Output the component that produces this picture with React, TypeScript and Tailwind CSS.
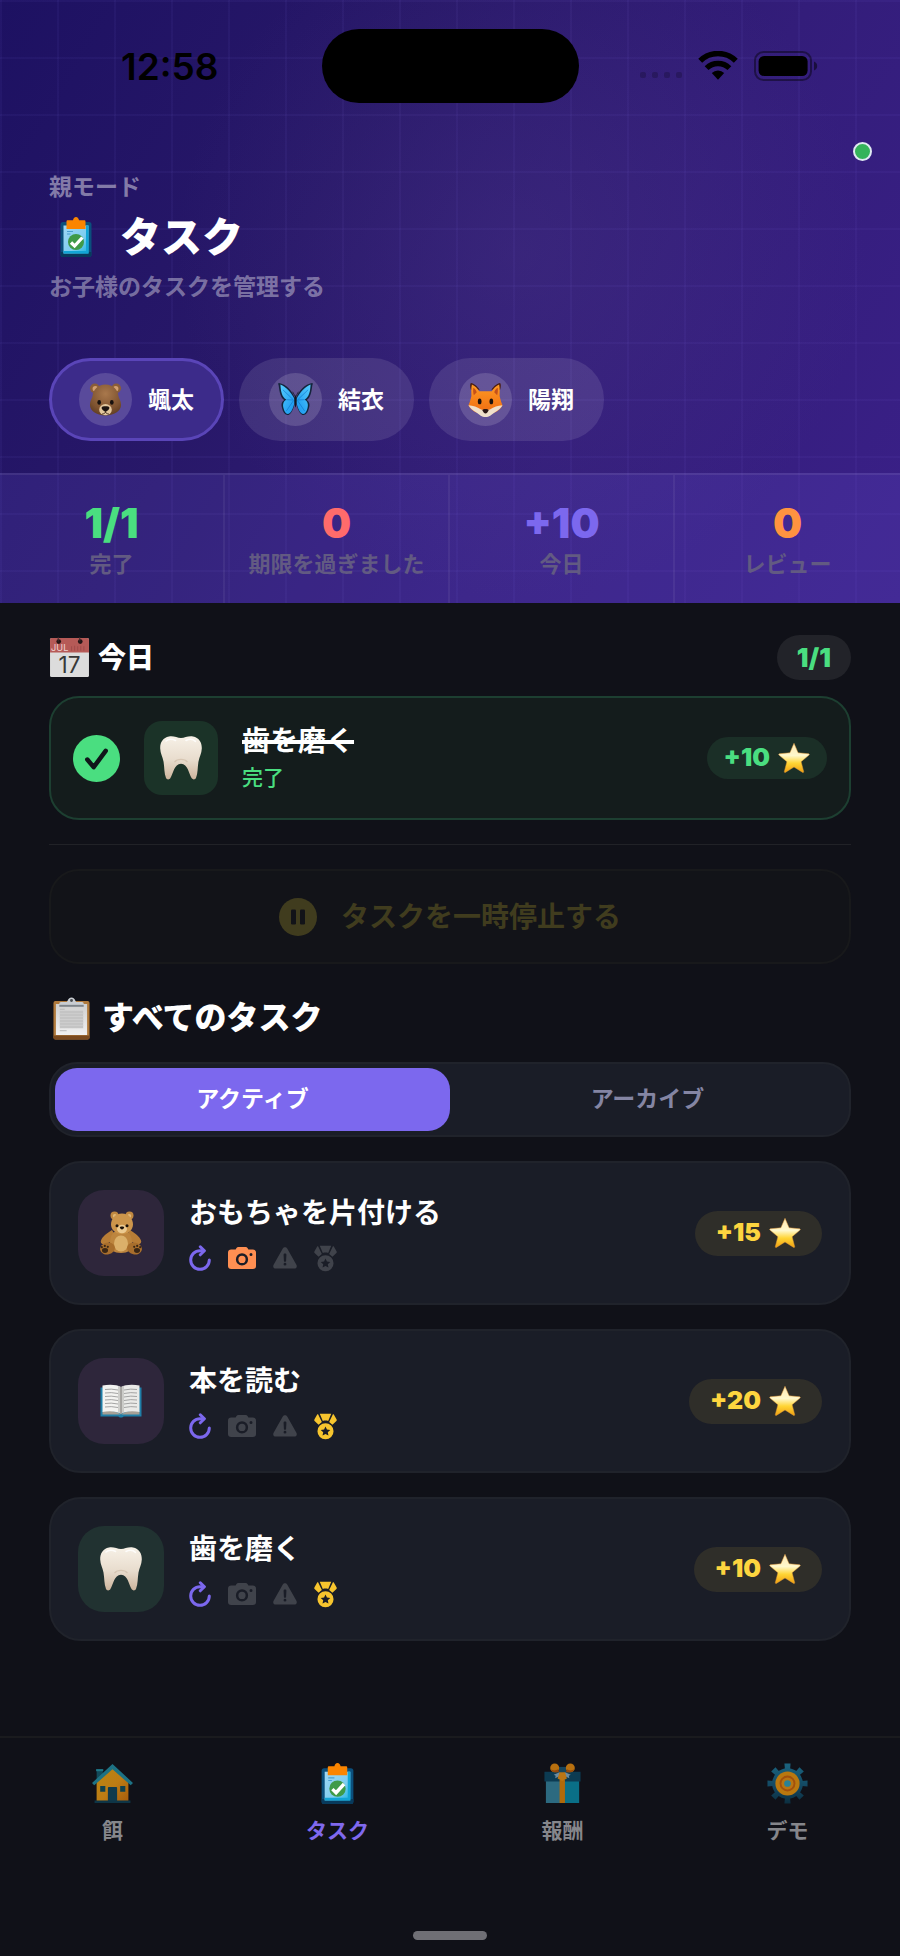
import React from "react";

type IconProps = { className?: string };

/* ---------- status bar ---------- */

function WifiIcon({ className }: IconProps) {
  return (
    <svg viewBox="0 0 40 30" className={className} aria-hidden="true">
      <path d="M2.2 10.2A25.5 25.5 0 0 1 37.8 10.2" fill="none" stroke="#000" strokeWidth="5.6" transform="translate(0 -.4)" />
      <path d="M8.6 17.2a16.2 16.2 0 0 1 22.8 0" fill="none" stroke="#000" strokeWidth="5.4" />
      <path d="M13.8 22a8.8 8.8 0 0 1 12.4 0L20 28.8z" fill="#000" />
    </svg>
  );
}

function BatteryIcon({ className }: IconProps) {
  return (
    <svg viewBox="0 0 64 30" className={className} aria-hidden="true">
      <rect x="1" y="1" width="56" height="28" rx="8.5" fill="none" stroke="#000" strokeOpacity=".42" strokeWidth="2" />
      <rect x="4.600" y="5" width="49" height="20" rx="5.500" fill="#000" />
      <path d="M60 10.500c2 .8 3.200 2.500 3.200 4.500s-1.200 3.700-3.200 4.500z" fill="#000" fillOpacity=".5" />
    </svg>
  );
}

/* ---------- emoji style drawings ---------- */

function BearFace({ className }: IconProps) {
  return (
    <svg viewBox="0 0 36 36" className={className} aria-hidden="true">
      <defs>
        <radialGradient id="bearHead" cx=".5" cy=".3" r=".75">
          <stop offset="0" stopColor="#a9784c" />
          <stop offset=".7" stopColor="#7d522f" />
          <stop offset="1" stopColor="#5b3a20" />
        </radialGradient>
      </defs>
      <circle cx="7" cy="6.500" r="5" fill="#8a5d38" />
      <circle cx="29" cy="6.500" r="5" fill="#8a5d38" />
      <circle cx="7.500" cy="7" r="2.800" fill="#d3a070" />
      <circle cx="28.500" cy="7" r="2.800" fill="#d3a070" />
      <path d="M18 2.500c8 0 12.800 5.500 13.300 12 .4 2.500 2.700 5 2.700 9 0 6-6.500 11-16 11s-16-5-16-11c0-4 2.300-6.500 2.700-9C5.200 8 10 2.500 18 2.500z" fill="url(#bearHead)" />
      <ellipse cx="18" cy="28.500" rx="6.500" ry="5.800" fill="#e2c69d" />
      <path d="M14 26.500c0-2 8-2 8 0 0 1.800-2.600 4-4 4s-4-2.200-4-4z" fill="#1d1411" />
      <path d="M14.500 33c2.300-.2 3.500-1.200 3.500-2.800 0 1.600 1.200 2.600 3.500 2.800" fill="none" stroke="#3b251a" strokeWidth="1" />
      <ellipse cx="11.500" cy="21" rx="1.900" ry="2.500" fill="#17110e" />
      <ellipse cx="24.500" cy="21" rx="1.900" ry="2.500" fill="#17110e" />
    </svg>
  );
}

function Butterfly({ className }: IconProps) {
  const wing = (
    <g>
      <path d="M17.500 17C15 9 8 2 1 1c-1.200 0-.8 1.500-.3 2.500C1.500 10 2.500 16 6.500 18.500c-3 2-3.500 5-2.300 8.500.8 3.500 2.500 6.500 5.300 7 3.500.3 6.500-6 8-13z" fill="#14243c" />
      <path d="M17 17.500C13.500 10.500 8 4.500 2.500 2.500 2.800 9 4 15.500 8.500 18c-3.300 2.300-3.800 5.500-2.800 9 .8 3.300 2.200 5.700 4.300 5.800 3 0 5.800-5.800 7-11.800z" fill="url(#wingBlue)" />
      <path d="M16 18.500 5 8M16 19 8.500 30M15.500 18.500l-7-.3" stroke="#0c6fc7" strokeWidth=".6" fill="none" />
    </g>
  );
  return (
    <svg viewBox="0 0 36 36" className={className} aria-hidden="true">
      <defs>
        <linearGradient id="wingBlue" x1="0" y1="0" x2="1" y2="1">
          <stop offset="0" stopColor="#56cdff" />
          <stop offset="1" stopColor="#1593ee" />
        </linearGradient>
      </defs>
      {wing}
      <g transform="matrix(-1 0 0 1 36 0)">{wing}</g>
      <path d="M18 14c1.200 0 1.300 4 .8 8.500-.2 2-.5 3.500-.8 3.500s-.6-1.500-.8-3.500c-.5-4.500-.4-8.500.8-8.500z" fill="#10161f" />
      <path d="M17.500 14.500 15 10M18.500 14.500 21 10" stroke="#10161f" strokeWidth=".7" />
    </svg>
  );
}

function FoxFace({ className }: IconProps) {
  return (
    <svg viewBox="0 0 36 36" className={className} aria-hidden="true">
      <defs>
        <linearGradient id="foxHead" x1="0" y1="0" x2="0" y2="1">
          <stop offset="0" stopColor="#ff9a24" />
          <stop offset="1" stopColor="#ee6a10" />
        </linearGradient>
      </defs>
      <path d="M3 1c3 .5 7 3.500 9 7h-9C2 5 2 2 3 1zM33 1c-3 .5-7 3.500-9 7h9c1-3 1-6 0-7z" fill="#4a1d12" />
      <path d="M4 2.500c3 1.500 6 4 7.500 7h13c1.500-3 4.500-5.500 7.500-7 1 4 .5 8 .5 12 1 4 1.800 7 3 9.500-2 5-9 9.500-17.500 9.500S2.500 29 .5 24c1.200-2.500 2-5.500 3-9.500 0-4-.5-8 .5-12z" fill="url(#foxHead)" />
      <path d="M5.500 6c1.500 1 2.800 2.500 3.500 4.500l-3 3c-.8-2.500-.9-5-.5-7.500zM30.500 6C29 7 27.700 8.500 27 10.500l3 3c.8-2.500.9-5 .5-7.500z" fill="#c4501a" />
      <path d="M.5 24c5 .5 9 1.800 12.500 4 2 1 3.500.5 5 .5s3 .5 5-.5c3.500-2.200 7.500-3.500 12.500-4-1.500 3-4.500 5.500-8.500 7.500C24 33.500 22 36 18 36s-6-2.500-9-4.500C5 29.500 2 27 .5 24z" fill="#efe0cb" />
      <ellipse cx="12" cy="20" rx="1.900" ry="3" fill="#1b120e" />
      <ellipse cx="24" cy="20" rx="1.900" ry="3" fill="#1b120e" />
      <path d="M15 29c0-1.500 6-1.500 6 0s-2 3.300-3 3.300-3-1.800-3-3.300z" fill="#2a1714" />
    </svg>
  );
}

function CalendarEmoji({ className }: IconProps) {
  return (
    <svg viewBox="0 0 40 40" className={className} role="img" aria-label="7月17日">
      <rect x="1" y="1" width="38" height="38" rx="1.500" fill="#dcdcdc" />
      <path d="M2.500 1h35A1.500 1.500 0 0 1 39 2.500V15H1V2.500A1.500 1.500 0 0 1 2.500 1z" fill="#b65a57" />
      <circle cx="9.500" cy="4.500" r="2.300" fill="#241516" />
      <circle cx="30.500" cy="4.500" r="2.300" fill="#241516" />
      <path d="M9 4.500V0M30 4.500V0" stroke="#3d2c2d" strokeWidth="1" />
      <text x="2" y="14" fontSize="9" fontWeight="400" fill="#f0d5d3" fontFamily="Inter, sans-serif">JUL</text>
      <path d="M22 13.500V9M25 13.500V8.500M28 13.500V9M31 13.500V8.500M34 13.500V9" stroke="#a14c4b" strokeWidth="1" />
      <text x="20" y="35" textAnchor="middle" fontSize="22" fontWeight="400" fill="#383838" fontFamily="Inter, sans-serif">17</text>
    </svg>
  );
}

function Tooth({ className }: IconProps) {
  return (
    <svg viewBox="0 0 42 44" className={className} aria-hidden="true">
      <defs>
        <linearGradient id="toothFill" x1="0" y1="0" x2="0" y2="1">
          <stop offset="0" stopColor="#f7f1e7" />
          <stop offset=".55" stopColor="#e8dccd" />
          <stop offset="1" stopColor="#cdb49c" />
        </linearGradient>
      </defs>
      <path d="M9 .5C14-.3 17 2 21 2S28-.3 33 .5c6 1 9 6 8.800 12-.2 5-2.300 8-3.300 13C37.500 31 38 37 36 42c-.6 1.700-3.200 2-4.300.3-3-4.500-3.700-14.500-10.700-14.500S13.300 37.800 10.300 42.300C9.200 44 6.600 43.700 6 42c-2-5-1.500-11-2.500-16.500-1-5-3.100-8-3.300-13C0 6.500 3 1.500 9 .5z" fill="url(#toothFill)" />
      <path d="M6 5c2.500-2.500 7-2 9.500-.5M26 4.500c3-1.500 7-1.500 9.500.8" stroke="#fff" strokeWidth="1.600" fill="none" strokeLinecap="round" opacity=".8" />
      <path d="M14.500 26c3-3.500 10-3.500 13 0" stroke="#cbb7a2" strokeWidth="1.200" fill="none" opacity=".6" />
    </svg>
  );
}

function Star({ className }: IconProps) {
  return (
    <svg viewBox="0 0 32 32" className={className} aria-hidden="true">
      <defs>
        <linearGradient id="starFill" x1="0" y1="0" x2="0" y2="1">
          <stop offset="0" stopColor="#ffe9b4" />
          <stop offset=".42" stopColor="#fff8cc" />
          <stop offset=".68" stopColor="#ffd535" />
          <stop offset="1" stopColor="#f0a010" />
        </linearGradient>
      </defs>
      <path d="M16 1.300l4.100 9.500 10.600 1c.6.100.8.700.4 1.100l-8 6.800 2.600 10c.1.600-.5 1-1 .7L16 25l-8.700 5.400c-.5.300-1.100-.1-1-.7l2.600-10-8-6.800c-.4-.4-.2-1 .4-1.100l10.600-1z" fill="url(#starFill)" stroke="#e39a3a" strokeWidth=".5" strokeLinejoin="round" />
    </svg>
  );
}

function ClipboardEmoji({ className }: IconProps) {
  return (
    <svg viewBox="0 0 40 44" className={className} aria-hidden="true">
      <defs>
        <linearGradient id="paperFill" x1="0" y1="0" x2="0" y2="1">
          <stop offset="0" stopColor="#cfcfcf" />
          <stop offset="1" stopColor="#f1f1f1" />
        </linearGradient>
      </defs>
      <rect x="1.500" y="4" width="37" height="39.500" rx="2" fill="#b07a3c" />
      <path d="M1.500 39.500h37v2a2 2 0 0 1-2 2h-33a2 2 0 0 1-2-2z" fill="#7a4a1f" />
      <path d="M4 7h32v32H4z" fill="url(#paperFill)" />
      <path d="M8 14h24v18H8z" fill="#c4c4c4" />
      <path d="M8 17h24M8 20h24M8 23h24M8 26h24M8 29h24" stroke="#cfcfcf" strokeWidth="1" />
      <path d="M8 12.500h5M8 34.500h7" stroke="#b9b9b9" strokeWidth="1" />
      <path d="M7.500 9.500V7c0-1 .6-1.800 1.700-1.800H15C16 5.200 16.200.5 20 .5s4 4.700 5 4.700h5.800c1.100 0 1.700.8 1.700 1.800v2.500z" fill="#c9cdd2" />
      <path d="M7.500 8h25v2h-25z" fill="#7f858b" />
      <circle cx="20" cy="3.600" r="1.500" fill="#4a4d51" />
    </svg>
  );
}

function TeddyBear({ className }: IconProps) {
  return (
    <svg viewBox="0 0 44 44" className={className} aria-hidden="true">
      <path d="M13 19c-5 3-10 7-11 10.500-1 3 2 4.500 5 3.500 4-1.500 9-5 10-7.500zM31 19c5 3 10 7 11 10.500 1 3-2 4.500-5 3.500-4-1.500-9-5-10-7.500z" fill="#b87d36" />
      <path d="M22 19c8 0 11 6 11 13s-4 10-11 10-11-3-11-10 3-13 11-13z" fill="#bd853e" />
      <ellipse cx="22" cy="32.500" rx="7" ry="8" fill="#dbb06a" />
      <ellipse cx="8.500" cy="37.500" rx="7.500" ry="6" fill="#a86e2c" transform="rotate(-12 8.500 37.500)" />
      <ellipse cx="35.500" cy="37.500" rx="7.500" ry="6" fill="#a86e2c" transform="rotate(12 35.500 37.500)" />
      <g fill="#3a2614">
        <ellipse cx="6" cy="39.500" rx="3" ry="2.400" />
        <circle cx="2.800" cy="36.200" r="1.100" />
        <circle cx="5.800" cy="34.900" r="1.100" />
        <circle cx="8.800" cy="35.800" r="1.100" />
        <ellipse cx="38" cy="39.500" rx="3" ry="2.400" />
        <circle cx="41.200" cy="36.200" r="1.100" />
        <circle cx="38.200" cy="34.900" r="1.100" />
        <circle cx="35.200" cy="35.800" r="1.100" />
      </g>
      <circle cx="15.500" cy="4.500" r="4" fill="#c08840" />
      <circle cx="30.500" cy="4.500" r="4" fill="#c08840" />
      <circle cx="15.800" cy="5" r="2" fill="#e2b978" />
      <circle cx="30.200" cy="5" r="2" fill="#e2b978" />
      <path d="M23 2.500c7 0 11 5.500 11 11s-5 9.500-11 9.500-11-4-11-9.500 4-11 11-11z" fill="#cc954b" />
      <ellipse cx="23" cy="18" rx="5" ry="4.200" fill="#ecca90" />
      <path d="M20.800 16.300c0-1 4.400-1 4.400 0s-1.400 2.200-2.200 2.200-2.200-1.200-2.200-2.200z" fill="#1c120b" />
      <circle cx="18" cy="14.800" r="1.500" fill="#1c120b" />
      <circle cx="28" cy="14.800" r="1.500" fill="#1c120b" />
    </svg>
  );
}

function OpenBook({ className }: IconProps) {
  return (
    <svg viewBox="0 0 42 34" className={className} aria-hidden="true">
      <path d="M.5 3.500h41v29h-18c-.5 1.300-4.500 1.300-5 0h-18z" fill="#1f7fa8" />
      <path d="M2.500 27.500C9 26 17 27 21 31c4-4 12-5 18.500-3.500v3h-37z" fill="#a6a096" />
      <path d="M21 3C17 .5 9 .2 2.500 1.500v26.500C9 26.700 17 27 21 30z" fill="#f3f3f1" />
      <path d="M21 3C25 .5 33 .2 39.500 1.500v26.500C33 26.700 25 27 21 30z" fill="#eaeae8" />
      <path d="M18 2c2 .5 3 1 3 1s1-.5 3-1v26.500c-1.800.6-3 1.500-3 1.500s-1.200-.9-3-1.500z" fill="#bdbdbb" opacity=".7" />
      <path d="M21 3v27" stroke="#77736e" strokeWidth=".9" />
      <path d="M5 5.500q6-1 13 .5M5 9q6-1 13 .5M5 12.500q6-1 13 .5M5 16q6-1 13 .5M5 19.500q6-1 13 .5M5 23q6-1 13 .5M24 6q7-1.500 13-.5M24 9.500q7-1.500 13-.5M24 13q7-1.500 13-.5M24 16.500q7-1.500 13-.5M24 20q7-1.500 13-.5M24 23.500q7-1.500 13-.5" fill="none" stroke="#9a9a9a" strokeWidth=".9" />
    </svg>
  );
}

/* ---------- coloured app icons ---------- */

function TaskBoard({ className }: IconProps) {
  return (
    <svg viewBox="0 0 40 40" className={className} aria-hidden="true">
      <defs>
        <linearGradient id="boardPaper" x1="0" y1="0" x2="1" y2="1">
          <stop offset="0" stopColor="#9fd8f5" />
          <stop offset=".6" stopColor="#7fcdf0" />
          <stop offset="1" stopColor="#19b4e0" />
        </linearGradient>
      </defs>
      <rect x="4.500" y="5" width="31" height="35" rx="2.500" fill="#0b4f7c" />
      <path d="M4.500 35h31v2.500A2.500 2.500 0 0 1 33 40H7a2.500 2.500 0 0 1-2.500-2.500z" fill="#083a5c" />
      <path d="M7.500 8.500h25v28h-25z" fill="url(#boardPaper)" />
      <path d="M7.500 34v2.500h25V8.500H30V34z" fill="#12a5d6" />
      <path d="M11 14.500h6M11 17h3.500" stroke="#4a9fd0" strokeWidth="1" />
      <path d="M10.500 12V4.500c0-.8.500-1.300 1.300-1.300H17C17.300 1.300 18.400 0 20 0s2.700 1.300 3 3.200h5.200c.8 0 1.300.5 1.300 1.300V12z" fill="#fb8500" />
      <circle cx="20" cy="25" r="8" fill="#3f9a48" />
      <path d="M15 25.500l3.600 3.500 7.800-8.500" fill="none" stroke="#fff" strokeWidth="3.300" />
    </svg>
  );
}

function House({ className }: IconProps) {
  return (
    <svg viewBox="0 0 40 40" className={className} aria-hidden="true">
      <defs>
        <linearGradient id="houseWall" x1="0" y1="0" x2="1" y2="1">
          <stop offset="0" stopColor="#b98612" />
          <stop offset=".55" stopColor="#bd7c14" />
          <stop offset="1" stopColor="#a85c0c" />
        </linearGradient>
      </defs>
      <path d="M4.500 6h6v10h-6z" fill="#124a5a" />
      <path d="M4 6h7v2H4z" fill="#1f7788" />
      <path d="M4.500 19 20 4l15.500 15v18.500h-31z" fill="url(#houseWall)" />
      <path d="M20 1 0 19.500l2.200 2.300L20 6l17.800 15.800 2.200-2.300z" fill="#1d7284" />
      <path d="M8 22.500h5v5.500H8zM27.500 22.500h5v5.500h-5z" fill="#10414e" />
      <path d="M15.500 37.500V24.500c0-.8.500-1 1.200-1h6.600c.7 0 1.200.2 1.200 1v13z" fill="#113b4d" />
      <path d="M2.500 36.500h35V39h-35z" fill="#0e3546" />
    </svg>
  );
}

function Gift({ className }: IconProps) {
  return (
    <svg viewBox="0 0 40 42" className={className} aria-hidden="true">
      <path d="M3 17h34v24H3z" fill="#2c6a80" />
      <path d="M22 17h15v24H22z" fill="#0a6f87" />
      <path d="M1.500 9h37v10h-37z" fill="#0c3b52" />
      <path d="M16 4h8v6h-8z" fill="#17455c" />
      <path d="M17 17h5.500v24H17z" fill="#b06a0a" />
      <ellipse cx="12" cy="5" rx="4.600" ry="4.400" fill="#b8700f" />
      <ellipse cx="28" cy="5" rx="4.600" ry="4.400" fill="#b8700f" />
      <path d="M7.800 6.500C9 9.500 13 10 16.500 9.500l-1-3c-2 1.500-5.500 1.500-7.700 0zM32.200 6.500C31 9.500 27 10 23.500 9.500l1-3c2 1.500 5.500 1.500 7.700 0z" fill="#97490c" />
      <path d="M17 9.500 11 12l2 1-.5 2.500L18 13zM22.500 9.500l6 2.500-2 1 .5 2.500L21.500 13z" fill="#6d8ca0" />
      <path d="M17 9.500h5.500l2 6.500-4.800 2.500L15 16z" fill="#bb7514" />
    </svg>
  );
}

function Gear({ className }: IconProps) {
  const teeth = [0, 45, 90, 135, 180, 225, 270, 315];
  return (
    <svg viewBox="0 0 44 44" className={className} aria-hidden="true">
      <defs>
        <linearGradient id="gearBlue" x1="0" y1="0" x2="0" y2="1">
          <stop offset="0" stopColor="#1b6580" />
          <stop offset=".6" stopColor="#124660" />
          <stop offset="1" stopColor="#0c2e3f" />
        </linearGradient>
      </defs>
      <mask id="gearMask">
        {teeth.map((angle) => (
          <path key={angle} d="M18.700.5h6.600l-.8 9h-5z" fill="#fff" transform={`rotate(${angle} 22 22)`} />
        ))}
        <circle cx="22" cy="22" r="16.500" fill="#fff" />
      </mask>
      <path d="M0 0h44v44H0z" fill="url(#gearBlue)" mask="url(#gearMask)" />
      <circle cx="22" cy="22" r="13" fill="#b9780f" />
      <circle cx="22" cy="22" r="8.500" fill="#a2500c" />
      <circle cx="22" cy="22" r="6.500" fill="#b87412" />
      <circle cx="22" cy="22" r="3.600" fill="#2b8196" />
    </svg>
  );
}

/* ---------- flat icons ---------- */

function RepeatIcon({ className }: IconProps) {
  return (
    <svg viewBox="0 0 22 26" className={className} aria-hidden="true" fill="none" stroke="currentColor" strokeWidth="3" strokeLinecap="round" strokeLinejoin="round">
      <path d="M20.300 15a9.300 9.300 0 1 1-9.300-9.300h3" />
      <path d="M11.300 1.800l4.100 4-4.100 4" />
    </svg>
  );
}

function CameraIcon({ className }: IconProps) {
  return (
    <svg viewBox="0 0 28 24" className={className} aria-hidden="true">
      <path fill="currentColor" fillRule="evenodd" d="M10.300 1h7.400c.8 0 1.300.3 1.800 1l.9 1.500h4.400C26.700 3.500 28 4.600 28 6.500V20c0 2-1.200 3-3.200 3H3.200C1.200 23 0 22 0 20V6.500c0-1.900 1.300-3 3.200-3h4.400L8.500 2c.5-.7 1-1 1.800-1zM14 7.300a6.100 6.100 0 1 0 0 12.200 6.100 6.100 0 0 0 0-12.200zm0 2.500a3.600 3.600 0 1 1 0 7.200 3.600 3.600 0 0 1 0-7.200zm9-2.800a1.500 1.500 0 1 0 0 3 1.500 1.500 0 0 0 0-3z" />
    </svg>
  );
}

function WarningIcon({ className }: IconProps) {
  return (
    <svg viewBox="0 0 24 24" className={className} aria-hidden="true">
      <path fill="currentColor" fillRule="evenodd" d="M9.800 2.500c1-1.700 3.400-1.700 4.400 0l9.200 16.300c1 1.700 0 3.700-2.200 3.700H2.800C.6 22.500-.4 20.500.6 18.800zM12 7.500c-.9 0-1.500.6-1.400 1.500l.3 5.800c0 .7.500 1.100 1.100 1.100s1.100-.4 1.100-1.100l.3-5.800c.1-.9-.5-1.500-1.400-1.500zm0 9.300a1.400 1.400 0 1 0 0 2.800 1.400 1.400 0 0 0 0-2.800z" />
    </svg>
  );
}

function MedalIcon({ className }: IconProps) {
  return (
    <svg viewBox="0 0 24 28" className={className} aria-hidden="true">
      <g fill="currentColor">
        <path d="M6 .8h12l-3.200 7.400c-1.800-.5-3.800-.5-5.600 0z" />
        <path d="M4.400 1.600 8.200 9.200 4.800 12.300.6 8.200c-.5-.5-.5-1-.1-1.700L3.200 1.700c.3-.6.900-.6 1.200-.1zM19.600 1.600l-3.800 7.600 3.400 3.100 4.200-4.100c.5-.5.5-1 .1-1.700l-2.700-4.800c-.3-.6-.9-.6-1.200-.1z" />
        <path fillRule="evenodd" d="M12 10.500a8.400 8.400 0 1 0 0 16.800 8.400 8.400 0 0 0 0-16.800zm0 3.400 1.500 3.300 3.500.4-2.600 2.400.7 3.500-3.100-1.800-3.100 1.800.7-3.500L7 17.600l3.500-.4z" />
      </g>
    </svg>
  );
}

function CheckBadge({ className }: IconProps) {
  return (
    <svg viewBox="0 0 46 46" className={className} aria-hidden="true">
      <circle cx="23" cy="23" r="23" fill="#4ade80" />
      <path d="M14 24l6.200 7.500L32 15.500" fill="none" stroke="#10151a" strokeWidth="4.400" strokeLinecap="round" strokeLinejoin="round" />
    </svg>
  );
}

function PauseBadge({ className }: IconProps) {
  return (
    <svg viewBox="0 0 38 38" className={className} aria-hidden="true">
      <circle cx="19" cy="19" r="19" fill="#403c1e" />
      <rect x="12" y="11.500" width="5" height="15" rx="1.200" fill="#121318" />
      <rect x="21" y="11.500" width="5" height="15" rx="1.200" fill="#121318" />
    </svg>
  );
}

/* ---------- data ---------- */

const children = [
  { name: "颯太", Face: BearFace, active: true },
  { name: "結衣", Face: Butterfly, active: false },
  { name: "陽翔", Face: FoxFace, active: false },
];

const stats = [
  { value: "1/1", label: "完了", color: "text-[#4ade80]" },
  { value: "0", label: "期限を過ぎました", color: "text-[#ff6b6b]" },
  { value: "+10", label: "今日", color: "text-[#7c68ee]" },
  { value: "0", label: "レビュー", color: "text-[#ff9340]" },
];

const tasks = [
  { title: "おもちゃを片付ける", points: "+15", tile: "bg-[#2e263b]", Art: TeddyBear, art: "size-[44px]", camera: "text-[#ff8f52]", medal: "text-[#40434b]" },
  { title: "本を読む", points: "+20", tile: "bg-[#2e263b]", Art: OpenBook, art: "w-[42px] h-[34px]", camera: "text-[#40434b]", medal: "text-[#f7c52e]" },
  { title: "歯を磨く", points: "+10", tile: "bg-[#213231]", Art: Tooth, art: "w-[42px] h-[46px]", camera: "text-[#40434b]", medal: "text-[#f7c52e]" },
];

const navItems = [
  { label: "餌", Icon: House, active: false },
  { label: "タスク", Icon: TaskBoard, active: true },
  { label: "報酬", Icon: Gift, active: false },
  { label: "デモ", Icon: Gear, active: false },
];

/* ---------- page ---------- */

function Header() {
  return (
    <header className="relative bg-[linear-gradient(to_right,rgba(150,130,255,0.05)_2px,transparent_2px),linear-gradient(to_bottom,rgba(150,130,255,0.05)_2px,transparent_2px),radial-gradient(circle_at_58%_42%,rgba(80,60,140,0.3),transparent_55%),linear-gradient(120deg,#1d1162_0%,#281869_35%,#331d7a_65%,#3a2088_100%)] bg-[size:57px_57px,57px_57px,auto,auto]">
      <div className="grid grid-cols-3 items-center pt-[29px] text-black">
        <time className="pl-[121px] text-[37px] leading-none font-semibold">12:58</time>
        <div className="mx-auto h-[74px] w-[257px] rounded-full bg-black" />
        <div className="flex items-center justify-end gap-4 pr-[82px]">
          <div className="flex gap-[6px] pt-[18px]">
            {[0, 1, 2, 3].map((dot) => (
              <span key={dot} className="size-[6px] rounded-[2px] bg-black/20" />
            ))}
          </div>
          <WifiIcon className="h-[30px] w-[40px]" />
          <BatteryIcon className="h-[30px] w-[64px]" />
        </div>
      </div>
      <span className="absolute top-[142px] right-[28px] size-[19px] rounded-full border-2 border-[#dfe9f2] bg-[#34b35a]" />

      <div className="px-[49px] pt-[70px] pb-[32px]">
        <p className="text-[23px] leading-[28px] font-bold text-white/45">親モード</p>
        <h1 className="mt-2 flex items-center gap-6 pl-[7px] text-[41px] leading-[56px] font-black text-white">
          <TaskBoard className="size-[40px]" />
          タスク
        </h1>
        <p className="mt-[6px] text-[23px] leading-[32px] font-bold text-white/40">お子様のタスクを管理する</p>

        <div className="mt-[55px] flex gap-[15px]">
          {children.map(({ name, Face, active }) => (
            <button
              key={name}
              type="button"
              aria-pressed={active}
              className={`flex items-center gap-4 rounded-full border-[3px] px-[27px] py-3 text-[23px] leading-[32px] font-bold text-white ${
                active ? "border-[#5a45b8] bg-[#3c2b8a]" : "border-transparent bg-white/10"
              }`}
            >
              <span className="flex size-[53px] items-center justify-center rounded-full bg-white/15">
                <Face className="size-[35px]" />
              </span>
              {name}
            </button>
          ))}
        </div>
      </div>

      <dl className="grid grid-cols-4 divide-x-2 divide-white/6 border-t-2 border-white/8 bg-[#7c68ee]/15">
        {stats.map(({ value, label, color }) => (
          <div key={label} className="flex flex-col-reverse items-center gap-[3px] pt-[24px] pb-[25px]">
            <dt className="text-[22px] leading-[28px] font-bold text-[#625a82]">{label}</dt>
            <dd className={`text-[41px] leading-[48px] font-black ${color}`}>{value}</dd>
          </div>
        ))}
      </dl>
    </header>
  );
}

function TodaySection() {
  return (
    <section>
      <div className="flex h-[45px] items-center justify-between">
        <h2 className="flex items-center gap-2 text-[28px] leading-[40px] font-black">
          <CalendarEmoji className="size-[41px]" />
          今日
        </h2>
        <span className="rounded-full bg-[#222329] px-5 text-[26px] leading-[45px] font-black text-[#4ade80]">1/1</span>
      </div>
      <article className="mt-4 flex items-center gap-6 rounded-[30px] border-2 border-[#1d3f31] bg-[#141c1c] px-[22px] py-[23px]">
        <CheckBadge className="size-[47px] shrink-0" />
        <div className="flex size-[74px] shrink-0 items-center justify-center rounded-[18px] bg-[#1b3328]">
          <Tooth className="h-[44px] w-[42px]" />
        </div>
        <div className="min-w-0 flex-1">
          <h3 className="text-[28px] leading-[40px] font-bold line-through decoration-4">歯を磨く</h3>
          <p className="text-[21px] leading-[34px] font-medium text-[#4ade80]">完了</p>
        </div>
        <span className="flex h-[42px] items-center gap-2 rounded-full bg-[#1b2f27] px-[17px] text-[25px] font-black text-[#4ade80]">
          +10
          <Star className="size-[32px]" />
        </span>
      </article>
    </section>
  );
}

function TaskCard({ title, points, tile, Art, art, camera, medal }: (typeof tasks)[number]) {
  return (
    <li className="flex items-center gap-[25px] rounded-[32px] border-2 border-[#20232b] bg-[#1a1d27] px-[27px] py-[27px]">
      <div className={`flex size-[86px] shrink-0 items-center justify-center rounded-[26px] ${tile}`}>
        <Art className={art} />
      </div>
      <div className="min-w-0 flex-1">
        <h3 className="text-[28px] leading-[38px] font-bold">{title}</h3>
        <div className="mt-[12px] flex h-[28px] items-center gap-[17px]">
          <RepeatIcon className="h-[26px] w-[22px] text-[#7c68ee]" />
          <CameraIcon className={`h-[24px] w-[28px] ${camera}`} />
          <WarningIcon className="size-[24px] text-[#40434b]" />
          <MedalIcon className={`h-[27px] w-[23px] ${medal}`} />
        </div>
      </div>
      <span className="flex h-[45px] items-center gap-2 rounded-full bg-[#2f2e29] px-[21px] text-[25px] font-black text-[#fdd53f]">
        {points}
        <Star className="size-[32px]" />
      </span>
    </li>
  );
}

function BottomNav() {
  return (
    <nav className="border-t-2 border-[#1a1b1e] pt-[25px] pb-4">
      <ul className="grid grid-cols-4">
        {navItems.map(({ label, Icon, active }) => (
          <li key={label}>
            <a
              href="#"
              aria-current={active ? "page" : undefined}
              className={`flex flex-col items-center gap-[13px] text-[21px] leading-[28px] font-bold ${
                active ? "text-[#8069ee]" : "text-[#85868b]"
              }`}
            >
              <Icon className="size-[41px]" />
              {label}
            </a>
          </li>
        ))}
      </ul>
      <div className="mx-auto mt-[86px] h-[9px] w-[74px] rounded-full bg-[#6f6f75]" />
    </nav>
  );
}

export default function App() {
  return (
    <div className="flex min-h-screen flex-col bg-[#101118] font-[Inter,'Noto_Sans_CJK_JP',sans-serif] text-white" lang="ja">
      <Header />
      <main className="flex-1 px-[49px] pt-8 pb-[95px]">
        <TodaySection />
        <hr className="mt-6 border-t-[1px] border-[#212227]" />
        <button
          type="button"
          className="mt-6 flex h-[95px] w-full items-center justify-center gap-6 rounded-[30px] border-2 border-[#18191b] bg-[#121318] text-[28px] font-bold text-[#403c1e]"
        >
          <PauseBadge className="size-[38px]" />
          タスクを一時停止する
        </button>
        <section>
          <h2 className="mt-[30px] flex items-center gap-[11px] pl-[3px] text-[32px] leading-[48px] font-black">
            <ClipboardEmoji className="h-[43px] w-[39px]" />
            すべてのタスク
          </h2>
          <div role="tablist" className="mt-5 grid h-[75px] grid-cols-2 rounded-[28px] border-2 border-[#20232b] bg-[#1a1d27] p-1 text-[23px] font-bold">
            <button type="button" role="tab" aria-selected="true" className="rounded-[22px] bg-[#7c68ee] text-white">
              アクティブ
            </button>
            <button type="button" role="tab" aria-selected="false" className="rounded-[22px] text-[#8485a3]">
              アーカイブ
            </button>
          </div>
          <ul className="mt-6 flex flex-col gap-6">
            {tasks.map((task) => (
              <TaskCard key={task.title} {...task} />
            ))}
          </ul>
        </section>
      </main>
      <BottomNav />
    </div>
  );
}
